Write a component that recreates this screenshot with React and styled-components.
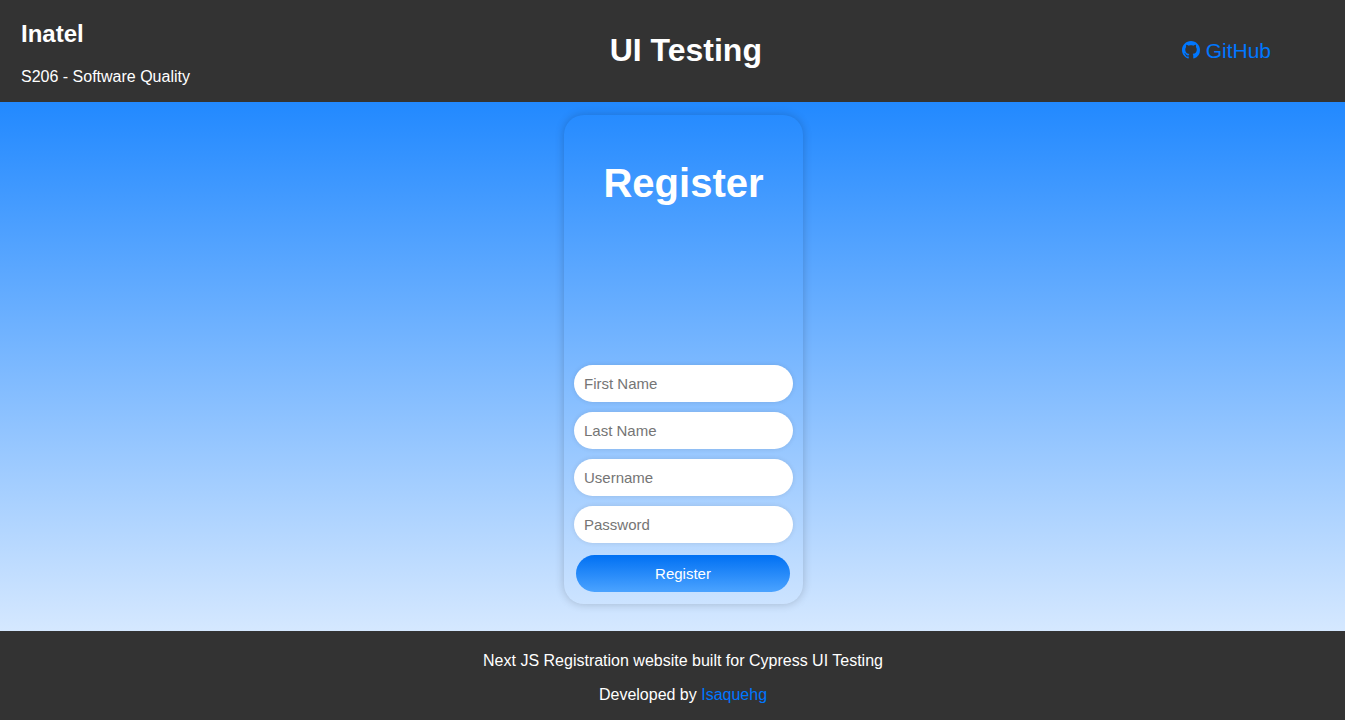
import React from "react";
import styled, { createGlobalStyle } from "styled-components";
import { BsGithub } from "react-icons/bs";

const GlobalStyle = createGlobalStyle`
  *, *::before, *::after { box-sizing: border-box; }
  body {
    margin: 0;
    font-family: "Liberation Sans", Arial, Helvetica, sans-serif;
    font-size: 16px;
    line-height: 18px;
    color: #fff;
  }
`;

const Page = styled.div`
  display: flex;
  flex-direction: column;
  min-height: 100vh;
`;

const Header = styled.header`
  display: flex;
  align-items: center;
  justify-content: space-between;
  padding: 0 74px 2px 21px;
  background: #333;
`;

const Brand = styled.div`
  display: flex;
  flex-direction: column;
  gap: 21px;
  padding: 20px 0 14px;
`;

const BrandName = styled.h2`
  margin: 0;
  font-size: 24px;
  line-height: 27px;
`;

const Text = styled.p`
  margin: 0;
`;

const SiteTitle = styled.h1`
  margin: 0;
  font-size: 32px;
  line-height: 36px;
`;

const Link = styled.a`
  color: #0077ff;
  text-decoration: none;
`;

const IconLink = styled(Link)`
  display: flex;
  align-items: center;
  gap: 6px;
  padding-top: 2px;
  font-size: 21px;
  line-height: 24px;

  svg {
    width: 18px;
    height: 18px;
    margin-bottom: 2px;
  }
`;

const Main = styled.main`
  flex: 1;
  display: flex;
  flex-direction: column;
  align-items: center;
  padding: 13px 0 27px 22px;
  background: linear-gradient(to bottom, #2289ff, #d5e8ff);
`;

const Card = styled.form`
  display: flex;
  flex-direction: column;
  gap: 10px;
  width: 239px;
  padding: 10px 10px 12px;
  border-radius: 20px;
  box-shadow: 0 0 10px rgba(0, 0, 0, 0.2);
`;

const CardTitle = styled.h2`
  margin: 36px 0 149px;
  font-size: 40px;
  line-height: 45px;
  text-align: center;
`;

const Field = styled.input`
  width: 100%;
  height: 37px;
  padding: 10px;
  border: 0;
  border-radius: 20px;
  background: #fff;
  box-shadow: 0 0 5px rgba(0, 0, 0, 0.1);
  font-family: inherit;
  font-size: 15px;

  &::placeholder {
    color: #757575;
  }
`;

const SubmitButton = styled.button`
  height: 37px;
  margin: 2px 3px 0 2px;
  padding: 10px;
  border: 0;
  border-radius: 20px;
  background: linear-gradient(to bottom, #0070f3, #4ba3ff);
  color: #fff;
  font-family: inherit;
  font-size: 15px;
  line-height: 17px;
  cursor: pointer;
`;

const Footer = styled.footer`
  display: flex;
  flex-direction: column;
  align-items: center;
  gap: 16px;
  padding: 21px 0 16px 21px;
  background: #333;
`;

const fields = [
  { name: "firstName", label: "First Name", type: "text" },
  { name: "lastName", label: "Last Name", type: "text" },
  { name: "username", label: "Username", type: "text" },
  { name: "password", label: "Password", type: "password" },
];

export default function App() {
  return (
    <Page>
      <GlobalStyle />
      <Header>
        <Brand>
          <BrandName>Inatel</BrandName>
          <Text>S206 - Software Quality</Text>
        </Brand>
        <SiteTitle>UI Testing</SiteTitle>
        <IconLink href="https://github.com">
          <BsGithub aria-hidden="true" />
          GitHub
        </IconLink>
      </Header>
      <Main>
        <Card onSubmit={(event) => event.preventDefault()}>
          <CardTitle>Register</CardTitle>
          {fields.map(({ name, label, type }) => (
            <Field
              key={name}
              name={name}
              type={type}
              placeholder={label}
              aria-label={label}
            />
          ))}
          <SubmitButton type="submit">Register</SubmitButton>
        </Card>
      </Main>
      <Footer>
        <Text>Next JS Registration website built for Cypress UI Testing</Text>
        <Text>
          Developed by <Link href="https://github.com/isaquehg">Isaquehg</Link>
        </Text>
      </Footer>
    </Page>
  );
}
